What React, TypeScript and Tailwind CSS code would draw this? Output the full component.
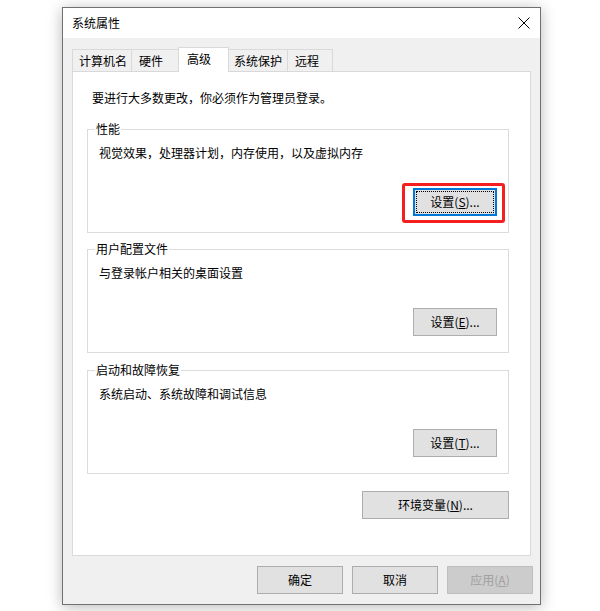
import React from "react";

const font = "font-['Microsoft_YaHei','Noto_Sans_CJK_SC',sans-serif]";

function Btn({
	children,
	className = "",
	disabled = false,
}: {
	children: React.ReactNode;
	className?: string;
	disabled?: boolean;
}) {
	return (
		<button
			className={`flex h-[28px] items-center justify-center border text-[12px] leading-none ${
				disabled
					? "border-[#bfbfbf] bg-[#cccccc] text-[#a0a0a0]"
					: "border-[#adadad] bg-[#e1e1e1] text-black"
			} ${className}`}
		>
			{children}
		</button>
	);
}

function Group({
	title,
	desc,
	children,
	className = "",
}: {
	title: string;
	desc: string;
	children: React.ReactNode;
	className?: string;
}) {
	return (
		<div className={`relative ml-[14px] mr-[21px] border border-[#dcdcdc] px-[11px] pb-[16px] pt-[15px] ${className}`}>
			{/* legend sits on the top border */}
			<span className="absolute left-[7px] top-[-9px] bg-white px-px text-[12px] leading-4">{title}</span>
			<p className="text-[12px] leading-4">{desc}</p>
			<div className="mt-[27px] flex justify-end">{children}</div>
		</div>
	);
}

export default function App() {
	const tabs = [
		{ label: "计算机名", w: "w-[59px]", pl: "pl-[6px]" },
		{ label: "硬件", w: "w-[47px]", pl: "pl-[7px]" },
		{ label: "高级", w: "w-[51px]", pl: "pl-[8px]", active: true },
		{ label: "系统保护", w: "w-[58px]", pl: "pl-[5px]" },
		{ label: "远程", w: "w-[46px]", pl: "pl-[7px]", last: true },
	];

	return (
		<div className={`h-[611px] w-[600px] overflow-hidden bg-white pl-[62px] pt-[7px] text-black ${font}`}>
			<div className="flex h-[598px] w-[479px] flex-col border border-[#707070] bg-[#f0f0f0] shadow-[0_2px_14px_rgba(0,0,0,0.28)]">
				{/* Title bar */}
				<div className="flex h-[30px] items-center justify-between bg-white pl-[9px] pr-[9px]">
					<span className="text-[12px]">系统属性</span>
					<svg width="12" height="12" viewBox="0 0 12 12" className="mr-[1px]">
						<path d="M0.5 0.5 L11.5 11.5 M11.5 0.5 L0.5 11.5" stroke="#000" strokeWidth="1" />
					</svg>
				</div>

				<div className="flex flex-1 flex-col px-[9px]">
					{/* Tabs */}
					<div className="relative z-10 mt-[9px] flex h-[25px] items-end">
						{tabs.map((t, i) => {
							const prevActive = i > 0 && tabs[i - 1].active;
							if (t.active) {
								return (
									<div
										key={t.label}
										className={`flex h-[25px] ${t.w} items-start border-x border-t border-[#d9d9d9] bg-white ${t.pl} pt-[3px] text-[12px] leading-4`}
									>
										{t.label}
									</div>
								);
							}
							return (
								<div
									key={t.label}
									className={`flex h-[23px] ${t.w} items-start border-b border-t border-[#d9d9d9] ${
										prevActive ? "" : "border-l"
									} ${t.last ? "border-r" : ""} bg-[#f0f0f0] ${t.pl} pt-[3px] text-[12px] leading-4`}
								>
									{t.label}
								</div>
							);
						})}
					</div>

					{/* Panel */}
					<div className="-mt-px flex h-[485px] flex-col border border-[#d9d9d9] bg-white">
						<p className="ml-[19px] mt-[18px] text-[12px] leading-4">要进行大多数更改，你必须作为管理员登录。</p>

						<Group title="性能" desc="视觉效果，处理器计划，内存使用，以及虚拟内存" className="mt-[23px]">
							<div className="relative">
								<div className="pointer-events-none absolute -bottom-[7px] -left-[11px] -right-[8px] -top-[5px] rounded-[3px] border-[3px] border-[#f51f1f]" />
								<button className="relative flex h-[28px] w-[84px] items-center justify-center border-2 border-[#0078d7] bg-[#e1e1e1] text-[12px] leading-none">
									<span className="absolute inset-px border border-dotted border-black" />
									设置(<u>S</u>)...
								</button>
							</div>
						</Group>

						<Group title="用户配置文件" desc="与登录帐户相关的桌面设置" className="mt-[16px]">
							<Btn className="w-[84px]">
								设置(<u>E</u>)...
							</Btn>
						</Group>

						<Group title="启动和故障恢复" desc="系统启动、系统故障和调试信息" className="mt-[17px]">
							<Btn className="w-[84px]">
								设置(<u>T</u>)...
							</Btn>
						</Group>

						<div className="mr-[21px] mt-[17px] flex justify-end">
							<Btn className="w-[147px]">
								环境变量(<u>N</u>)...
							</Btn>
						</div>
					</div>

					{/* Footer buttons */}
					<div className="-mr-[2px] mt-[10px] flex justify-end gap-[9px]">
						<Btn className="w-[86px]">确定</Btn>
						<Btn className="w-[86px]">取消</Btn>
						<Btn className="w-[86px]" disabled>
							应用(<u>A</u>)
						</Btn>
					</div>
				</div>
			</div>
		</div>
	);
}
